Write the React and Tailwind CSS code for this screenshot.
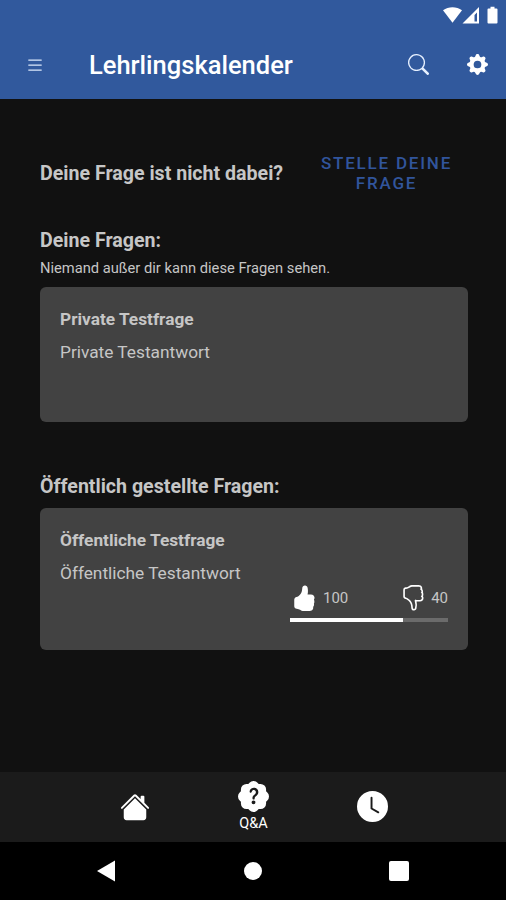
import React from 'react';
import {
  BsList, BsSearch, BsGearFill, BsHandThumbsUpFill, BsHandThumbsDown,
  BsHouseFill, BsPatchQuestionFill, BsClockFill,
} from 'react-icons/bs';

function StatusBar() {
  return (
    <div className="flex h-[31px] justify-end pt-[6px] pr-[7px]">
      <svg width="56" height="18" viewBox="0 0 56 18" fill="white">
        <path d="M0 4.2C5.5 0.2 13.500.2 19 4.2L9.500 16.800Z" />
        <path fillRule="evenodd" d="M36 1V17.500H19.500ZM31.500 9V15.500H34V6.500Z" />
        <path d="M45.500 2.500h2V.8h4v1.700h2q1 0 1 1v13q0 1-1 1h-8q-1 0-1-1v-13q0-1 1-1Z" />
      </svg>
    </div>
  );
}

function Header() {
  return (
    <header className="h-[98.5px] shrink-0 bg-[#31599d] text-white">
      <StatusBar />
      <div className="flex h-[67px] items-center pr-[18px] pl-[25px]">
        <BsList size={20} className="text-[#dce9fb]" />
        <h1 className="mt-[1px] ml-[44px] grow text-[25.5px] leading-[30px] font-medium">Lehrlingskalender</h1>
        <BsSearch size={21} className="mr-[38px] text-[#e6f0ff]" />
        <BsGearFill size={21} />
      </div>
    </header>
  );
}

function Card({ title, answer, className, children }) {
  return (
    <article className={`rounded-[6px] bg-[#424242] px-[20px] pt-[20px] ${className}`}>
      <h3 className="text-[17.3px] leading-[24px] font-bold">{title}</h3>
      <p className="mt-[9px] text-[17.3px] leading-[24px]">{answer}</p>
      {children}
    </article>
  );
}

function Votes({ up, down }) {
  return (
    <div className="-mt-[1px] ml-auto w-[158px] text-[15px] leading-[26px]">
      <div className="flex items-center justify-between pl-[1px]">
        <div className="flex items-center gap-[6px]">
          <BsHandThumbsUpFill size={26} className="text-white" />
          <span className="pt-[1px]">{up}</span>
        </div>
        <div className="flex items-center gap-[5px]">
          <BsHandThumbsDown size={26} className="text-white" />
          <span className="pt-[1px]">{down}</span>
        </div>
      </div>
      <div className="mt-[7px] h-[4px] bg-[#6b6b6b]">
        <div className="h-full bg-white" style={{ width: `${(up / (up + down)) * 100}%` }} />
      </div>
    </div>
  );
}

export default function App() {
  return (
    <div className="flex h-[900px] w-[506px] flex-col overflow-hidden bg-[#111111] font-[Roboto,sans-serif] text-[#c6c6c6]">
      <Header />
      <main className="flex grow flex-col pr-[38px] pl-[40px]">
        <div className="mt-[49px] flex h-[50px] items-center justify-between">
          <h2 className="pt-[2px] text-[19.6px] leading-[24px] font-bold whitespace-nowrap">Deine Frage ist nicht dabei?</h2>
          <button className="w-[163px] text-[17px] leading-[20px] font-medium tracking-[1.8px] text-[#31559c] uppercase">
            Stelle deine Frage
          </button>
        </div>
        <section className="mt-[31.5px]">
          <h2 className="text-[19.6px] leading-[24px] font-bold">Deine Fragen:</h2>
          <p className="mt-[5px] text-[14.7px] leading-[20px]">Niemand außer dir kann diese Fragen sehen.</p>
          <Card title="Private Testfrage" answer="Private Testantwort" className="mt-[9px] h-[135px]" />
        </section>
        <section className="mt-[52.5px]">
          <h2 className="text-[19.6px] leading-[24px] font-bold">Öffentlich gestellte Fragen:</h2>
          <Card title="Öffentliche Testfrage" answer="Öffentliche Testantwort" className="mt-[9.5px] h-[142px]">
            <Votes up={100} down={40} />
          </Card>
        </section>
      </main>
      <nav className="flex h-[70px] shrink-0 items-center bg-[#1b1b1b] px-[75px] text-white">
        <div className="flex flex-1 justify-center"><BsHouseFill size={30} className="ml-[1px]" /></div>
        <div className="flex flex-1 flex-col items-center">
          <BsPatchQuestionFill size={31} />
          <span className="mt-[3px] ml-[1px] text-[14.5px] leading-[18px]">Q&amp;A</span>
        </div>
        <div className="flex flex-1 justify-center"><BsClockFill size={31} className="-mt-[1px] ml-[1px]" /></div>
      </nav>
      <footer className="flex h-[58px] shrink-0 items-center justify-between bg-black px-[97px]">
        <svg width="18" height="22" viewBox="0 0 18 22" fill="white"><path d="M0 11L18 .5v21Z" /></svg>
        <div className="ml-[2px] size-[18px] rounded-full bg-white" />
        <div className="size-[20px] rounded-[2px] bg-white" />
      </footer>
    </div>
  );
}
